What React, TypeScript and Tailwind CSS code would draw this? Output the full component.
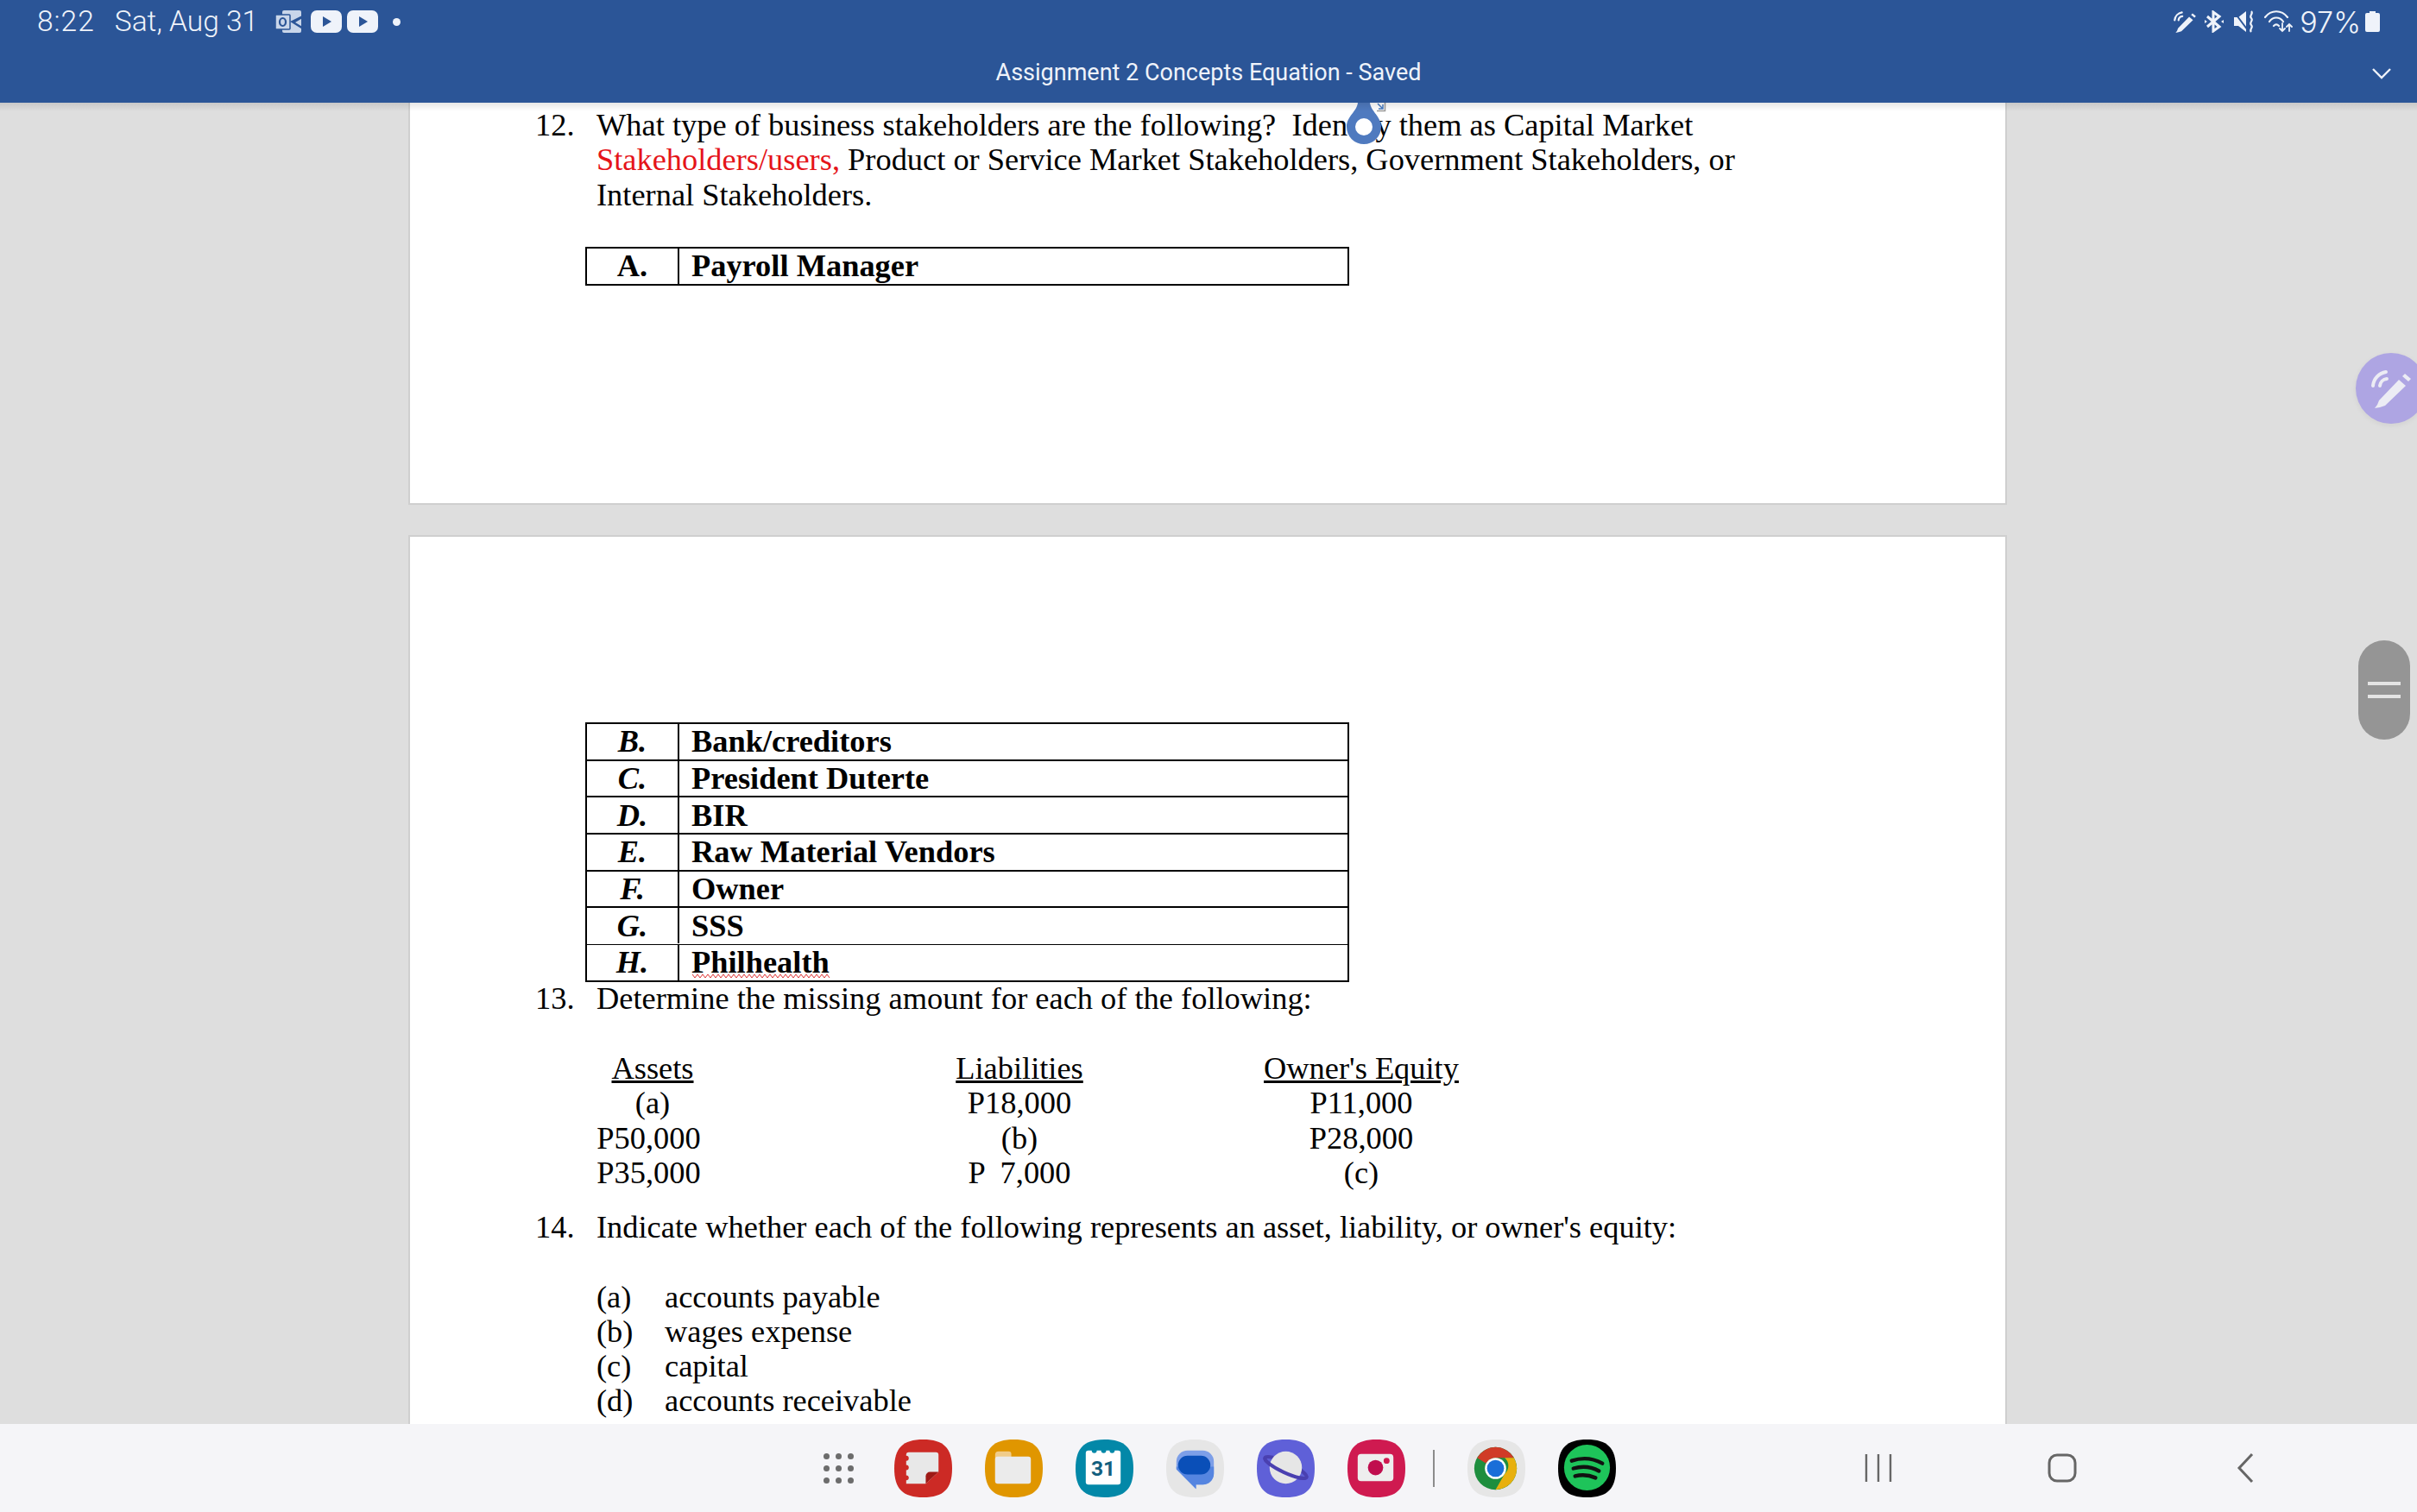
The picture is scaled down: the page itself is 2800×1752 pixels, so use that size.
const serif = 'font-["Liberation_Serif",serif]'

const tableRows = [
  ['B.', 'Bank/creditors'],
  ['C.', 'President Duterte'],
  ['D.', 'BIR'],
  ['E.', 'Raw Material Vendors'],
  ['F.', 'Owner'],
  ['G.', 'SSS'],
  ['H.', 'Philhealth'],
]

const accountItems = [
  ['(a)', 'accounts payable'],
  ['(b)', 'wages expense'],
  ['(c)', 'capital'],
  ['(d)', 'accounts receivable'],
]

const SQUIRCLE = 'M34 0C58 0 68 10 68 34S58 68 34 68 0 58 0 34 10 0 34 0z'

function YoutubeIcon() {
  return (
    <svg width="36" height="26" viewBox="0 0 36 26">
      <rect width="36" height="26" rx="7" fill="#eff3fa" />
      <path d="M14 7l10 6-10 6z" fill="#2b5597" />
    </svg>
  )
}

function PenIcon({ size, color }: { size: number; color: string }) {
  return (
    <svg width={size} height={size} viewBox="0 0 50 50" fill="none" stroke={color}>
      <path d="M6 48l3-4 2-5L34 15l8 7-24 23-6 2z" fill={color} stroke="none" />
      <path d="M38 11l3-3 7 6-3 3z" fill={color} stroke="none" />
      <path d="M4 22a18 18 0 0 1 15-16M12 22a9 9 0 0 1 8-8" strokeWidth="4" strokeLinecap="round" />
    </svg>
  )
}

function StatusBar() {
  return (
    <div className="flex h-[50px] items-center justify-between pl-[43px] pr-[43px] text-[#eff3fa]">
      <div className="flex items-center font-['Roboto',sans-serif] text-[33.5px] font-light">
        <span className="tracking-[1px]">8:22</span>
        <span className="ml-[23px]">Sat, Aug 31</span>
        <svg className="ml-[20px]" width="33" height="26" viewBox="0 0 33 26">
          <rect x="8" width="22" height="26" rx="2" fill="#c9d6ea" />
          <rect y="5" width="17" height="17" rx="1" fill="#c9d6ea" stroke="#2b5597" strokeWidth="1.5" />
          <ellipse cx="8.5" cy="13.5" rx="3.5" ry="4.5" fill="none" stroke="#2b5597" strokeWidth="2.2" />
          <path d="M17 13L33 5v3l-10 6 10 6v3z" fill="#2b5597" />
        </svg>
        <div className="ml-[8px] flex gap-[6px]">
          <YoutubeIcon />
          <YoutubeIcon />
        </div>
        <span className="ml-[17px] h-[9px] w-[9px] rounded-full bg-[#eff3fa]" />
      </div>
      <div className="flex items-center">
        <PenIcon size={28} color="#eff3fa" />
        <svg className="ml-[9px]" width="22" height="26" viewBox="0 0 22 26" fill="none" stroke="#eff3fa" strokeWidth="3">
          <path d="M3 7l14 12-7 5V2l7 5L3 19" />
          <path d="M0 11l3 2-3 2zM22 11l-3 2 3 2z" fill="#eff3fa" stroke="none" />
        </svg>
        <svg className="ml-[12px]" width="24" height="26" viewBox="0 0 24 26" fill="#eff3fa">
          <path d="M0 8h5l9-7v24l-9-7H0z" />
          <path d="M1 3l15 20" fill="none" stroke="#2b5597" strokeWidth="2" />
          <path d="M20 1c3 3-3 5 0 8s-3 5 0 8 -3 5 0 8" fill="none" stroke="#eff3fa" strokeWidth="2.2" />
        </svg>
        <svg className="ml-[11px]" width="33" height="26" viewBox="0 0 33 26" fill="none" stroke="#eff3fa" strokeWidth="2.2" strokeLinecap="round">
          <path d="M1 8c7-9 19-9 26 0M6 13c4-6 12-6 16 0M11 18c2-2 4-2 6 0" />
          <path d="M21 15v9m-3-3l3 3 3-3M29 24v-8m-3 3l3-3 3 3" strokeWidth="1.8" />
        </svg>
        <span className="ml-[8px] font-['Inter',sans-serif] text-[34px] font-light">97%</span>
        <svg className="ml-[5px]" width="17" height="24" viewBox="0 0 17 24">
          <path d="M5 0h7v2h3a2 2 0 0 1 2 2v18a2 2 0 0 1-2 2H2a2 2 0 0 1-2-2V4a2 2 0 0 1 2-2h3z" fill="#eff3fa" />
        </svg>
      </div>
    </div>
  )
}

function TitleBar() {
  return (
    <div className="relative flex h-[69px] items-center justify-center">
      <span className="font-['Roboto',sans-serif] text-[27px] text-[#eff3fa]">Assignment 2 Concepts Equation - Saved</span>
      <svg className="absolute right-[29px] top-[28px]" width="24" height="14" viewBox="0 0 24 14" fill="none" stroke="#eff3fa" strokeWidth="2.4">
        <path d="M2 2l10 10L22 2" />
      </svg>
    </div>
  )
}

function TableRow({ letter, label, italic }: { letter: string; label: string; italic?: boolean }) {
  return (
    <div className="flex h-[40.7px] items-center leading-none">
      <div className={`flex h-full w-[107px] shrink-0 items-center justify-center border-r-[2px] border-black font-bold ${italic ? 'italic' : ''}`}>
        {letter}
      </div>
      <div className="pl-[14px] font-bold">{label}</div>
    </div>
  )
}

function Dock() {
  return (
    <div className="flex h-[102px] items-center bg-[#f5f5f8]">
      <div className="ml-[954px] grid grid-cols-3 gap-[7px]">
        {Array.from({ length: 9 }).map((_, i) => (
          <span key={i} className="h-[7px] w-[7px] rounded-full bg-[#6c6c6c]" />
        ))}
      </div>
      <div className="ml-[47px] flex items-center gap-[38px]">
        <svg width="67" height="67" viewBox="0 0 68 68">
          <path d={SQUIRCLE} fill="#cc2a25" />
          <path d="M14 18a3 3 0 0 1 3-3h32a3 3 0 0 1 3 3v20L37 52H14z" fill="#e8e8e8" />
          <circle cx="14" cy="22" r="3" fill="#cc2a25" />
          <circle cx="14" cy="33" r="3" fill="#cc2a25" />
          <circle cx="14" cy="45" r="3" fill="#cc2a25" />
          <path d="M37 52V43a5 5 0 0 1 5-5h10z" fill="#9e1a16" />
        </svg>
        <svg width="67" height="67" viewBox="0 0 68 68">
          <path d={SQUIRCLE} fill="#e09600" />
          <path d="M12 18a4 4 0 0 1 4-4h12a3 3 0 0 1 3 3v5H12z" fill="#f0cc8a" />
          <path d="M12 22h2v26h-2z" fill="#f0cc8a" />
          <rect x="12" y="20" width="42" height="32" rx="3" fill="#ebebeb" />
        </svg>
        <svg width="67" height="67" viewBox="0 0 68 68">
          <path d={SQUIRCLE} fill="#0388a8" />
          <rect x="12" y="13" width="41" height="40" rx="3" fill="#fff" />
          <circle cx="22" cy="13" r="3" fill="#0388a8" />
          <circle cx="33" cy="13" r="3" fill="#0388a8" />
          <circle cx="43" cy="13" r="3" fill="#0388a8" />
          <text x="32.5" y="43" textAnchor="middle" fontSize="25" fontWeight="700" fontFamily="Roboto" fill="#135f7e">31</text>
        </svg>
        <svg width="67" height="67" viewBox="0 0 68 68">
          <path d={SQUIRCLE} fill="#e6e6e6" />
          <path d="M25 13h18a13 13 0 0 1 13 13v14a13 13 0 0 1-13 13h-8v5L12 35V26a13 13 0 0 1 13-13z" fill="#7d9fe8" />
          <path d="M12 32h44v8a13 13 0 0 1-13 13h-8v5L12 35z" fill="#5585e0" />
          <rect x="14" y="19" width="38" height="22" rx="11" fill="#0a4fb8" />
        </svg>
        <svg width="67" height="67" viewBox="0 0 68 68">
          <path d={SQUIRCLE} fill="#5f60d8" />
          <ellipse cx="34" cy="33" rx="27" ry="6" transform="rotate(25 34 33)" fill="none" stroke="#4a40b0" strokeWidth="4" />
          <circle cx="34" cy="33" r="19" fill="#e6e6e6" />
          <g transform="rotate(25 34 33)">
            <path d="M7 33A27 6 0 0 0 61 33" fill="none" stroke="#4a40b0" strokeWidth="4" />
          </g>
        </svg>
        <svg width="67" height="67" viewBox="0 0 68 68">
          <path d={SQUIRCLE} fill="#cf1a50" />
          <rect x="12" y="17" width="42" height="32" rx="4" fill="#eee" />
          <circle cx="33" cy="33" r="9" fill="#c00d4e" />
          <circle cx="46" cy="25" r="3.5" fill="#cf1a50" />
        </svg>
      </div>
      <span className="ml-[32px] h-[43px] w-[2px] bg-[#8c8c8c]" />
      <div className="ml-[38px] flex items-center gap-[38px]">
        <svg width="67" height="67" viewBox="0 0 68 68">
          <path d={SQUIRCLE} fill="#e6e6e6" />
          <circle cx="33" cy="34" r="25" fill="#1e8e3e" />
          <path d="M33 9a25 25 0 0 1 21.7 12.5H33a12.5 12.5 0 0 0-11 6.6L11.4 21.5A25 25 0 0 1 33 9z" fill="#d03b27" />
          <path d="M54.7 21.5A25 25 0 0 1 33 59l10.8-18.7a12.5 12.5 0 0 0 0-18.8z" fill="#e8b00e" />
          <circle cx="33" cy="34" r="12.5" fill="#fff" />
          <circle cx="33" cy="34" r="10" fill="#1a6ed8" />
        </svg>
        <svg width="67" height="67" viewBox="0 0 68 68">
          <path d={SQUIRCLE} fill="#000" />
          <circle cx="34" cy="33" r="27" fill="#1ec45a" />
          <path d="M16 25c12-4 25-3 36 3M18 34c10-3 21-2 30 3M20 43c8-2 17-1 24 2" fill="none" stroke="#111" strokeWidth="4.5" strokeLinecap="round" />
        </svg>
      </div>
      <svg className="ml-[287px]" width="34" height="34" viewBox="0 0 34 34" fill="none" stroke="#666" strokeWidth="2.4">
        <path d="M3 1v32M17 1v32M31 1v32" />
      </svg>
      <svg className="ml-[179px]" width="34" height="34" viewBox="0 0 34 34" fill="none" stroke="#666" strokeWidth="3">
        <rect x="2" y="2" width="30" height="30" rx="9" />
      </svg>
      <svg className="ml-[185px]" width="20" height="36" viewBox="0 0 20 36" fill="none" stroke="#666" strokeWidth="3">
        <path d="M18 2L3 18l15 16" />
      </svg>
    </div>
  )
}

function EquationColumn({ heading, cells, className }: { heading: string; cells: string[]; className: string }) {
  return (
    <div className={`flex flex-col items-center ${className}`}>
      <u>{heading}</u>
      {cells.map((cell) => (
        <span key={cell} className="whitespace-pre">
          {cell}
        </span>
      ))}
    </div>
  )
}

function App() {
  return (
    <div className="flex h-[1752px] w-[2800px] flex-col overflow-hidden bg-[#dedede]">
      <header className="h-[119px] shrink-0 bg-[#2b5597]">
        <StatusBar />
        <TitleBar />
      </header>

      <main className={`relative h-[1531px] shrink-0 overflow-hidden text-[36.4px] leading-[40.3px] text-black ${serif}`}>
        <div className="pointer-events-none absolute inset-x-0 top-0 z-10 h-[10px] bg-gradient-to-b from-black/10 to-transparent" />

        <section className="ml-[473px] h-[466px] w-[1852px] border-x-2 border-b-2 border-[#cfcfcf] bg-white pl-[145px] pt-[6px]">
          <div className="flex">
            <span className="w-[71px] shrink-0">12.</span>
            <p className="w-[1400px]">
              What type of business stakeholders are the following?&nbsp; Identify them as Capital Market{' '}
              <span className="text-[#e5141a]">Stakeholders/users,</span> Product or Service Market Stakeholders, Government Stakeholders, or Internal Stakeholders.
            </p>
          </div>
          <div className="ml-[58px] mt-[40px] w-[885px] border-[2px] border-black">
            <TableRow letter="A." label="Payroll Manager" />
          </div>
        </section>

        <section className="ml-[473px] mt-[35px] h-[1100px] w-[1852px] border-x-2 border-t-2 border-[#cfcfcf] bg-white pl-[145px] pt-[215px]">
          <div className="ml-[58px] w-[885px] border-[2px] border-black">
            {tableRows.map(([letter, label], i) => (
              <div
                key={letter}
                className={i === 6 ? 'relative' : i === 5 ? 'border-b border-black pb-[1px]' : 'border-b-[2px] border-black'}
              >
                <TableRow letter={letter} label={label} italic />
                {i === 6 && (
                  <svg className="absolute left-[122px] top-[33px]" width="160" height="6" viewBox="0 0 160 6" fill="none" stroke="#d33" strokeWidth="1">
                    <path d="M0 1l3 4 3-4 3 4 3-4 3 4 3-4 3 4 3-4 3 4 3-4 3 4 3-4 3 4 3-4 3 4 3-4 3 4 3-4 3 4 3-4 3 4 3-4 3 4 3-4 3 4 3-4 3 4 3-4 3 4 3-4 3 4 3-4 3 4 3-4 3 4 3-4 3 4 3-4 3 4 3-4 3 4 3-4 3 4 3-4 3 4 3-4 3 4 3-4 3 4 3-4 3 4 3-4 3 4" />
                  </svg>
                )}
              </div>
            ))}
          </div>

          <div className="-mt-[1px] flex">
            <span className="w-[71px] shrink-0">13.</span>
            <p>Determine the missing amount for each of the following:</p>
          </div>

          <div className="ml-[71px] mt-[41px] flex">
            <EquationColumn heading="Assets" cells={['(a)', 'P50,000 ', 'P35,000 ']} className="w-[130px]" />
            <EquationColumn heading="Liabilities" cells={['P18,000', '(b)', 'P  7,000']} className="ml-[210px] w-[300px]" />
            <EquationColumn heading="Owner's Equity" cells={['P11,000', 'P28,000', '(c)']} className="ml-[96px] w-[300px]" />
          </div>

          <div className="mt-[23px] flex">
            <span className="w-[71px] shrink-0">14.</span>
            <p>Indicate whether each of the following represents an asset, liability, or owner's equity:</p>
          </div>

          <div className="ml-[71px] mt-[40px]">
            {accountItems.map(([mark, text]) => (
              <div key={mark} className="flex">
                <span className="w-[79px] shrink-0">{mark}</span>
                <span>{text}</span>
              </div>
            ))}
          </div>
        </section>

        {/* selection handle and the comment marker behind it */}
        <svg className="absolute left-[1595px] top-0" width="11" height="11" viewBox="0 0 11 11" fill="none">
          <path d="M0 9.5h9.5V0" stroke="#9a9a9a" strokeWidth="1.5" />
          <path d="M1 1l6 6M7 2v5H2" stroke="#4a7cc0" strokeWidth="1.5" />
        </svg>
        <svg className="absolute left-[1558px] top-0" width="44" height="48" viewBox="0 0 44 48">
          <path d="M15 0H29C30 10 42 16 42 28A20 20 0 0 1 2 28C2 16 14 10 15 0z" fill="#4f7abf" />
          <circle cx="22" cy="28" r="10" fill="#fff" />
        </svg>

        {/* side tools */}
        <div className="absolute left-[2729px] top-[290px] flex h-[82px] w-[82px] items-center justify-center rounded-full bg-[#aea5e3] shadow-[0_2px_6px_rgba(0,0,0,0.06)]">
          <PenIcon size={50} color="#ececf4" />
        </div>
        <div className="absolute left-[2732px] top-[623px] flex h-[115px] w-[60px] flex-col items-center justify-center gap-[11px] rounded-[30px] bg-[#959595]">
          <span className="h-[4px] w-[38px] bg-[#e4e4e4]" />
          <span className="h-[4px] w-[38px] bg-[#e4e4e4]" />
        </div>
      </main>

      <Dock />
    </div>
  )
}

export default App
